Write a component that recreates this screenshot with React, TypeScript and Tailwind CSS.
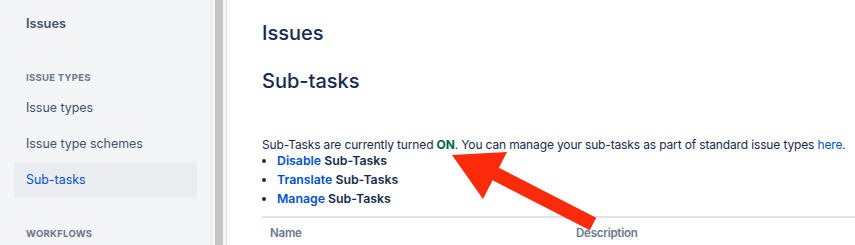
export default function App() {
  return (
    <div className="relative flex h-[245px] w-[855px] overflow-hidden bg-white font-['Inter',sans-serif] text-[#172b4d]">
      <aside className="flex w-[212px] shrink-0 flex-col border-r border-[#e4e6ea] bg-[#f4f5f7] px-[14px] text-[12.4px]">
        <div className="mt-[4px] flex h-[40px] items-center px-[12px] text-[12.8px] font-semibold text-[#42526e]">Issues</div>
        <div className="mt-[24px] flex h-[20px] items-center px-[12px] text-[9.5px] font-bold tracking-[0.03em] text-[#6b778c]">
          ISSUE TYPES
        </div>
        <div className="mt-[2px] flex h-[36px] items-center px-[12px] text-[#42526e]">Issue types</div>
        <div className="flex h-[36px] items-center px-[12px] text-[#42526e]">Issue type schemes</div>
        <div className="flex h-[36px] items-center rounded-[3px] bg-[#ebecf0] px-[12px] text-[#0052cc]">Sub-tasks</div>
        <div className="mt-[26px] flex h-[20px] items-center px-[12px] text-[9.5px] font-bold tracking-[0.03em] text-[#6b778c]">
          WORKFLOWS
        </div>
      </aside>
      <div className="flex w-[15px] shrink-0 justify-center border-r border-[#e2e2e2] bg-[#f6f6f6] px-[2px]">
        <div className="w-[8px] bg-[#c4c4c4]" />
      </div>
      <main className="flex-1 pl-[35px]">
        <h1 className="mt-[20px] h-[26px] text-[20px] font-medium leading-[26px]">Issues</h1>
        <h2 className="mt-[20px] h-[30px] text-[20px] font-medium leading-[30px]">Sub-tasks</h2>
        <p className="mt-[41px] whitespace-nowrap text-[12px] leading-[16px] tracking-[-0.012em]">
          Sub-Tasks are currently turned <span className="font-bold text-[#006644]">ON</span>. You can manage your
          sub-tasks as part of standard issue types <span className="text-[#0052cc]">here</span>.
        </p>
        <ul className="-mt-[2px] list-disc pl-[15px] text-[12.3px] font-semibold leading-[19px]">
          <li>
            <span className="text-[#0052cc]">Disable</span> Sub-Tasks
          </li>
          <li>
            <span className="text-[#0052cc]">Translate</span> Sub-Tasks
          </li>
          <li>
            <span className="text-[#0052cc]">Manage</span> Sub-Tasks
          </li>
        </ul>
        <div className="mt-[8px] flex h-[34px] items-center border-t-2 border-[#dfe1e6] text-[11.5px] font-semibold tracking-[-0.02em] text-[#6b778c]">
          <div className="w-[314px] pl-[8px]">Name</div>
          <div>Description</div>
        </div>
      </main>
      <svg className="pointer-events-none absolute left-0 top-0" width="855" height="245">
        <polygon points="452,155 507,152 483,199" fill="#fa2a0a" />
        <line x1="490" y1="171" x2="593" y2="224" stroke="#fa2a0a" strokeWidth="14" />
      </svg>
    </div>
  );
}
